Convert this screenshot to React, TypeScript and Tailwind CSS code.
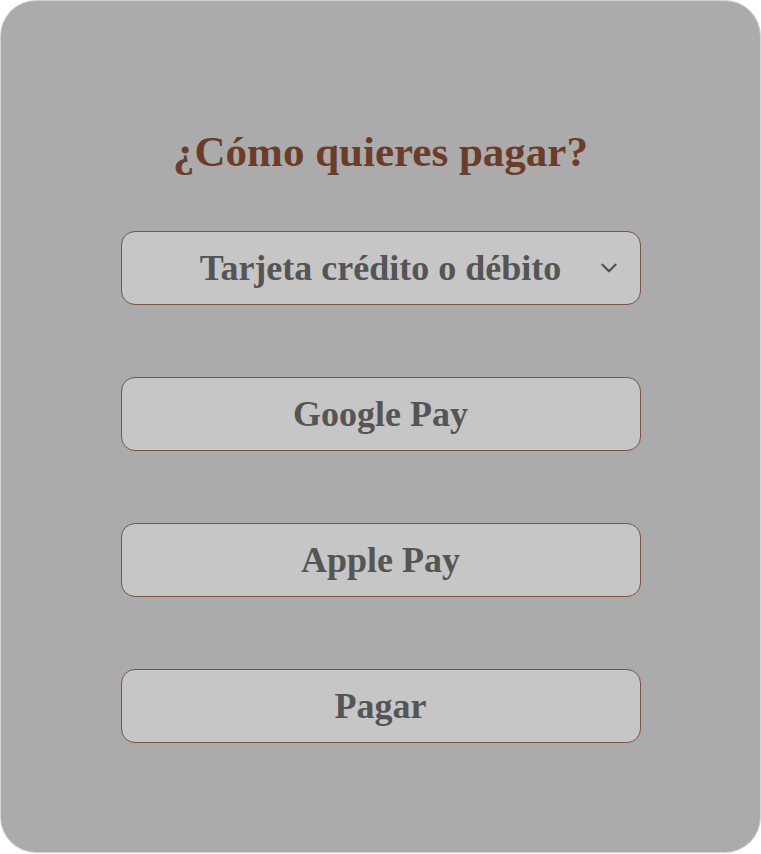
import { ChevronDown } from "lucide-react";

const options = ["Google Pay", "Apple Pay", "Pagar"];

export default function App() {
  return (
    <div className="h-[854px] w-[761px] bg-white">
      <div
        className="flex h-[853px] w-[761px] flex-col items-center rounded-[36px] border border-[#d4d4d4] bg-[#ababab] pt-[124px]"
        style={{ fontFamily: '"Liberation Serif", "DejaVu Serif", serif' }}
      >
        {/* title */}
        <h1 className="text-[43px] font-bold leading-[54px] text-[#6b3d29]">
          ¿Cómo quieres pagar?
        </h1>

        <div className="mt-[52px] flex w-[520px] flex-col gap-[72px]">
          {/* card selector */}
          <button className="relative flex h-[74px] items-center justify-center rounded-[14px] border border-[#7b5243] bg-[#c6c6c6] text-[36px] font-bold text-[#555555]">
            Tarjeta crédito o débito
            <ChevronDown
              className="absolute right-[18px] top-1/2 -translate-y-1/2 text-[#555555]"
              size={26}
              strokeWidth={2.2}
            />
          </button>

          {options.map((label) => (
            <button
              key={label}
              className="flex h-[74px] items-center justify-center rounded-[14px] border border-[#7b5243] bg-[#c6c6c6] text-[36px] font-bold text-[#555555]"
            >
              {label}
            </button>
          ))}
        </div>
      </div>
    </div>
  );
}
